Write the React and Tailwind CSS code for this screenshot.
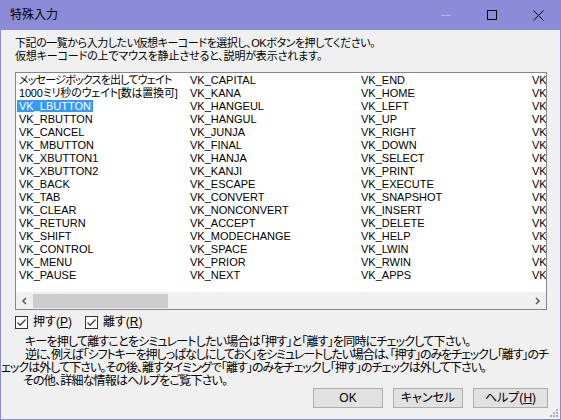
import React from "react";

const col1 = ["メッセージボックスを出してウェイト","1000ミリ秒のウェイト[数は置換可]","VK_LBUTTON","VK_RBUTTON","VK_CANCEL","VK_MBUTTON","VK_XBUTTON1","VK_XBUTTON2","VK_BACK","VK_TAB","VK_CLEAR","VK_RETURN","VK_SHIFT","VK_CONTROL","VK_MENU","VK_PAUSE"];
const col2 = ["VK_CAPITAL","VK_KANA","VK_HANGEUL","VK_HANGUL","VK_JUNJA","VK_FINAL","VK_HANJA","VK_KANJI","VK_ESCAPE","VK_CONVERT","VK_NONCONVERT","VK_ACCEPT","VK_MODECHANGE","VK_SPACE","VK_PRIOR","VK_NEXT"];
const col3 = ["VK_END","VK_HOME","VK_LEFT","VK_UP","VK_RIGHT","VK_DOWN","VK_SELECT","VK_PRINT","VK_EXECUTE","VK_SNAPSHOT","VK_INSERT","VK_DELETE","VK_HELP","VK_LWIN","VK_RWIN","VK_APPS"];
const col4 = Array.from({ length: 16 }, () => "VK");

const trackFor = (col, i) => {
  if (col === 0 && i === 0) return "tracking-[-0.8px]";
  if (col === 0 && i === 1) return "tracking-[-0.2px]";
  return "";
};

function Column({ items, selected, col, w = "w-[171px]" }) {
  return (
    <div className={`${w} shrink-0 flex flex-col`}>
      {items.map((t, i) => (
        <div key={i} className={`h-[13px] leading-[13px] whitespace-nowrap ${trackFor(col, i)}`}>
          <span className={i === selected ? "bg-[#3399ff] text-white px-[2px] -mx-[2px]" : ""}>{t}</span>
        </div>
      ))}
    </div>
  );
}

function Check({ label, ul }) {
  return (
    <div className="flex items-center gap-[5px]">
      <div className="w-[13px] h-[13px] border border-[#333] bg-white flex items-center justify-center">
        <svg width="11" height="11" viewBox="0 0 11 11">
          <path d="M1.5 5.5 L4.2 8.2 L9.5 2.5" fill="none" stroke="#444" strokeWidth="1.3" />
        </svg>
      </div>
      <span>{label}(<span className="underline">{ul}</span>)</span>
    </div>
  );
}

function Btn({ children, w }) {
  return (
    <div className={`h-[20px] ${w} border border-[#adadad] bg-[#e1e1e1] flex items-center justify-center`}>
      {children}
    </div>
  );
}

export default function App() {
  return (
    <div className="w-[561px] h-[420px] bg-[#8b8bd8] flex flex-col text-black [font-family:'Liberation_Sans','Noto_Sans_CJK_JP',sans-serif] text-[12px] [font-feature-settings:'palt']">
      {/* title bar */}
      <div className="h-[30px] flex items-center shrink-0">
        <div className="pl-[10px] text-[12px] flex-1">特殊入力</div>
        <div className="flex items-center h-full">
          <div className="w-[46px] h-full flex items-center justify-center">
            <div className="w-[10px] h-px bg-[#b5b5ee]" />
          </div>
          <div className="w-[46px] h-full flex items-center justify-center">
            <div className="w-[10px] h-[10px] border border-black" />
          </div>
          <div className="w-[46px] h-full flex items-center justify-center">
            <svg width="11" height="11" viewBox="0 0 11 11">
              <path d="M0.5 0.5 L10.5 10.5 M10.5 0.5 L0.5 10.5" stroke="black" strokeWidth="1" />
            </svg>
          </div>
        </div>
      </div>
      {/* body */}
      <div className="flex-1 mx-px mb-px bg-[#f0f0f0] flex flex-col relative">
        <div className="pl-[14px] pt-[7px] leading-[13px] whitespace-nowrap text-[11px]">
          <div className="tracking-[-0.45px]">下記の一覧から入力したい仮想キーコードを選択し、OKボタンを押してください。</div>
          <div className="tracking-[-0.15px]">仮想キーコードの上でマウスを静止させると、説明が表示されます。</div>
        </div>
        <div className="ml-[14px] mt-[9px] w-[532px] h-[238px] border border-[#828790] bg-white flex flex-col">
          <div className="flex-1 overflow-hidden pl-[3px] pt-[1px] flex text-[11px]">
            <Column items={col1} selected={2} col={0} />
            <Column items={col2} col={1} />
            <Column items={col3} col={2} />
            <Column items={col4} col={3} w="w-[14px]" />
          </div>
          <div className="h-[17px] bg-[#f0f0f0] flex items-center shrink-0">
            <div className="w-[17px] h-full flex items-center justify-center">
              <svg width="7" height="8" viewBox="0 0 7 8"><path d="M5 1 L2 4 L5 7" fill="none" stroke="#606060" strokeWidth="1.6" /></svg>
            </div>
            <div className="w-[135px] h-[14px] bg-[#cdcdcd]" />
            <div className="flex-1" />
            <div className="w-[17px] h-full flex items-center justify-center">
              <svg width="7" height="8" viewBox="0 0 7 8"><path d="M2 1 L5 4 L2 7" fill="none" stroke="#606060" strokeWidth="1.6" /></svg>
            </div>
          </div>
        </div>
        <div className="flex items-center gap-[13px] ml-[14px] mt-[3px]">
          <Check label="押す" ul="P" />
          <Check label="離す" ul="R" />
        </div>
        <div className="mt-[5px] leading-[13px] whitespace-nowrap">
          <div className="pl-[24px] tracking-[-0.8px]">キーを押して離すことをシミュレートしたい場合は「押す」と「離す」を同時にチェックして下さい。</div>
          <div className="pl-[24px] tracking-[-1.08px]">逆に、例えば「シフトキーを押しっぱなしにしておく」をシミュレートしたい場合は、「押す」のみをチェックし「離す」のチ</div>
          <div className="pl-0 tracking-[-0.95px]">ェックは外して下さい。その後、離すタイミングで「離す」のみをチェックし「押す」のチェックは外して下さい。</div>
          <div className="pl-[22px] tracking-[-0.8px]">その他、詳細な情報はヘルプをご覧下さい。</div>
        </div>
        <div className="flex-1" />
        <div className="flex justify-end gap-[10px] pr-[12px] pb-[11px]">
          <Btn w="w-[70px]">OK</Btn>
          <Btn w="w-[70px]">キャンセル</Btn>
          <Btn w="w-[75px]">ヘルプ(<span className="underline">H</span>)</Btn>
        </div>
        <div className="absolute right-[2px] bottom-[2px] w-[8px] h-[8px]">
          <svg width="8" height="8" viewBox="0 0 8 8" fill="#b0b0b0">
            <rect x="6" y="0" width="2" height="2" /><rect x="3" y="3" width="2" height="2" /><rect x="6" y="3" width="2" height="2" />
            <rect x="0" y="6" width="2" height="2" /><rect x="3" y="6" width="2" height="2" /><rect x="6" y="6" width="2" height="2" />
          </svg>
        </div>
      </div>
    </div>
  );
}
